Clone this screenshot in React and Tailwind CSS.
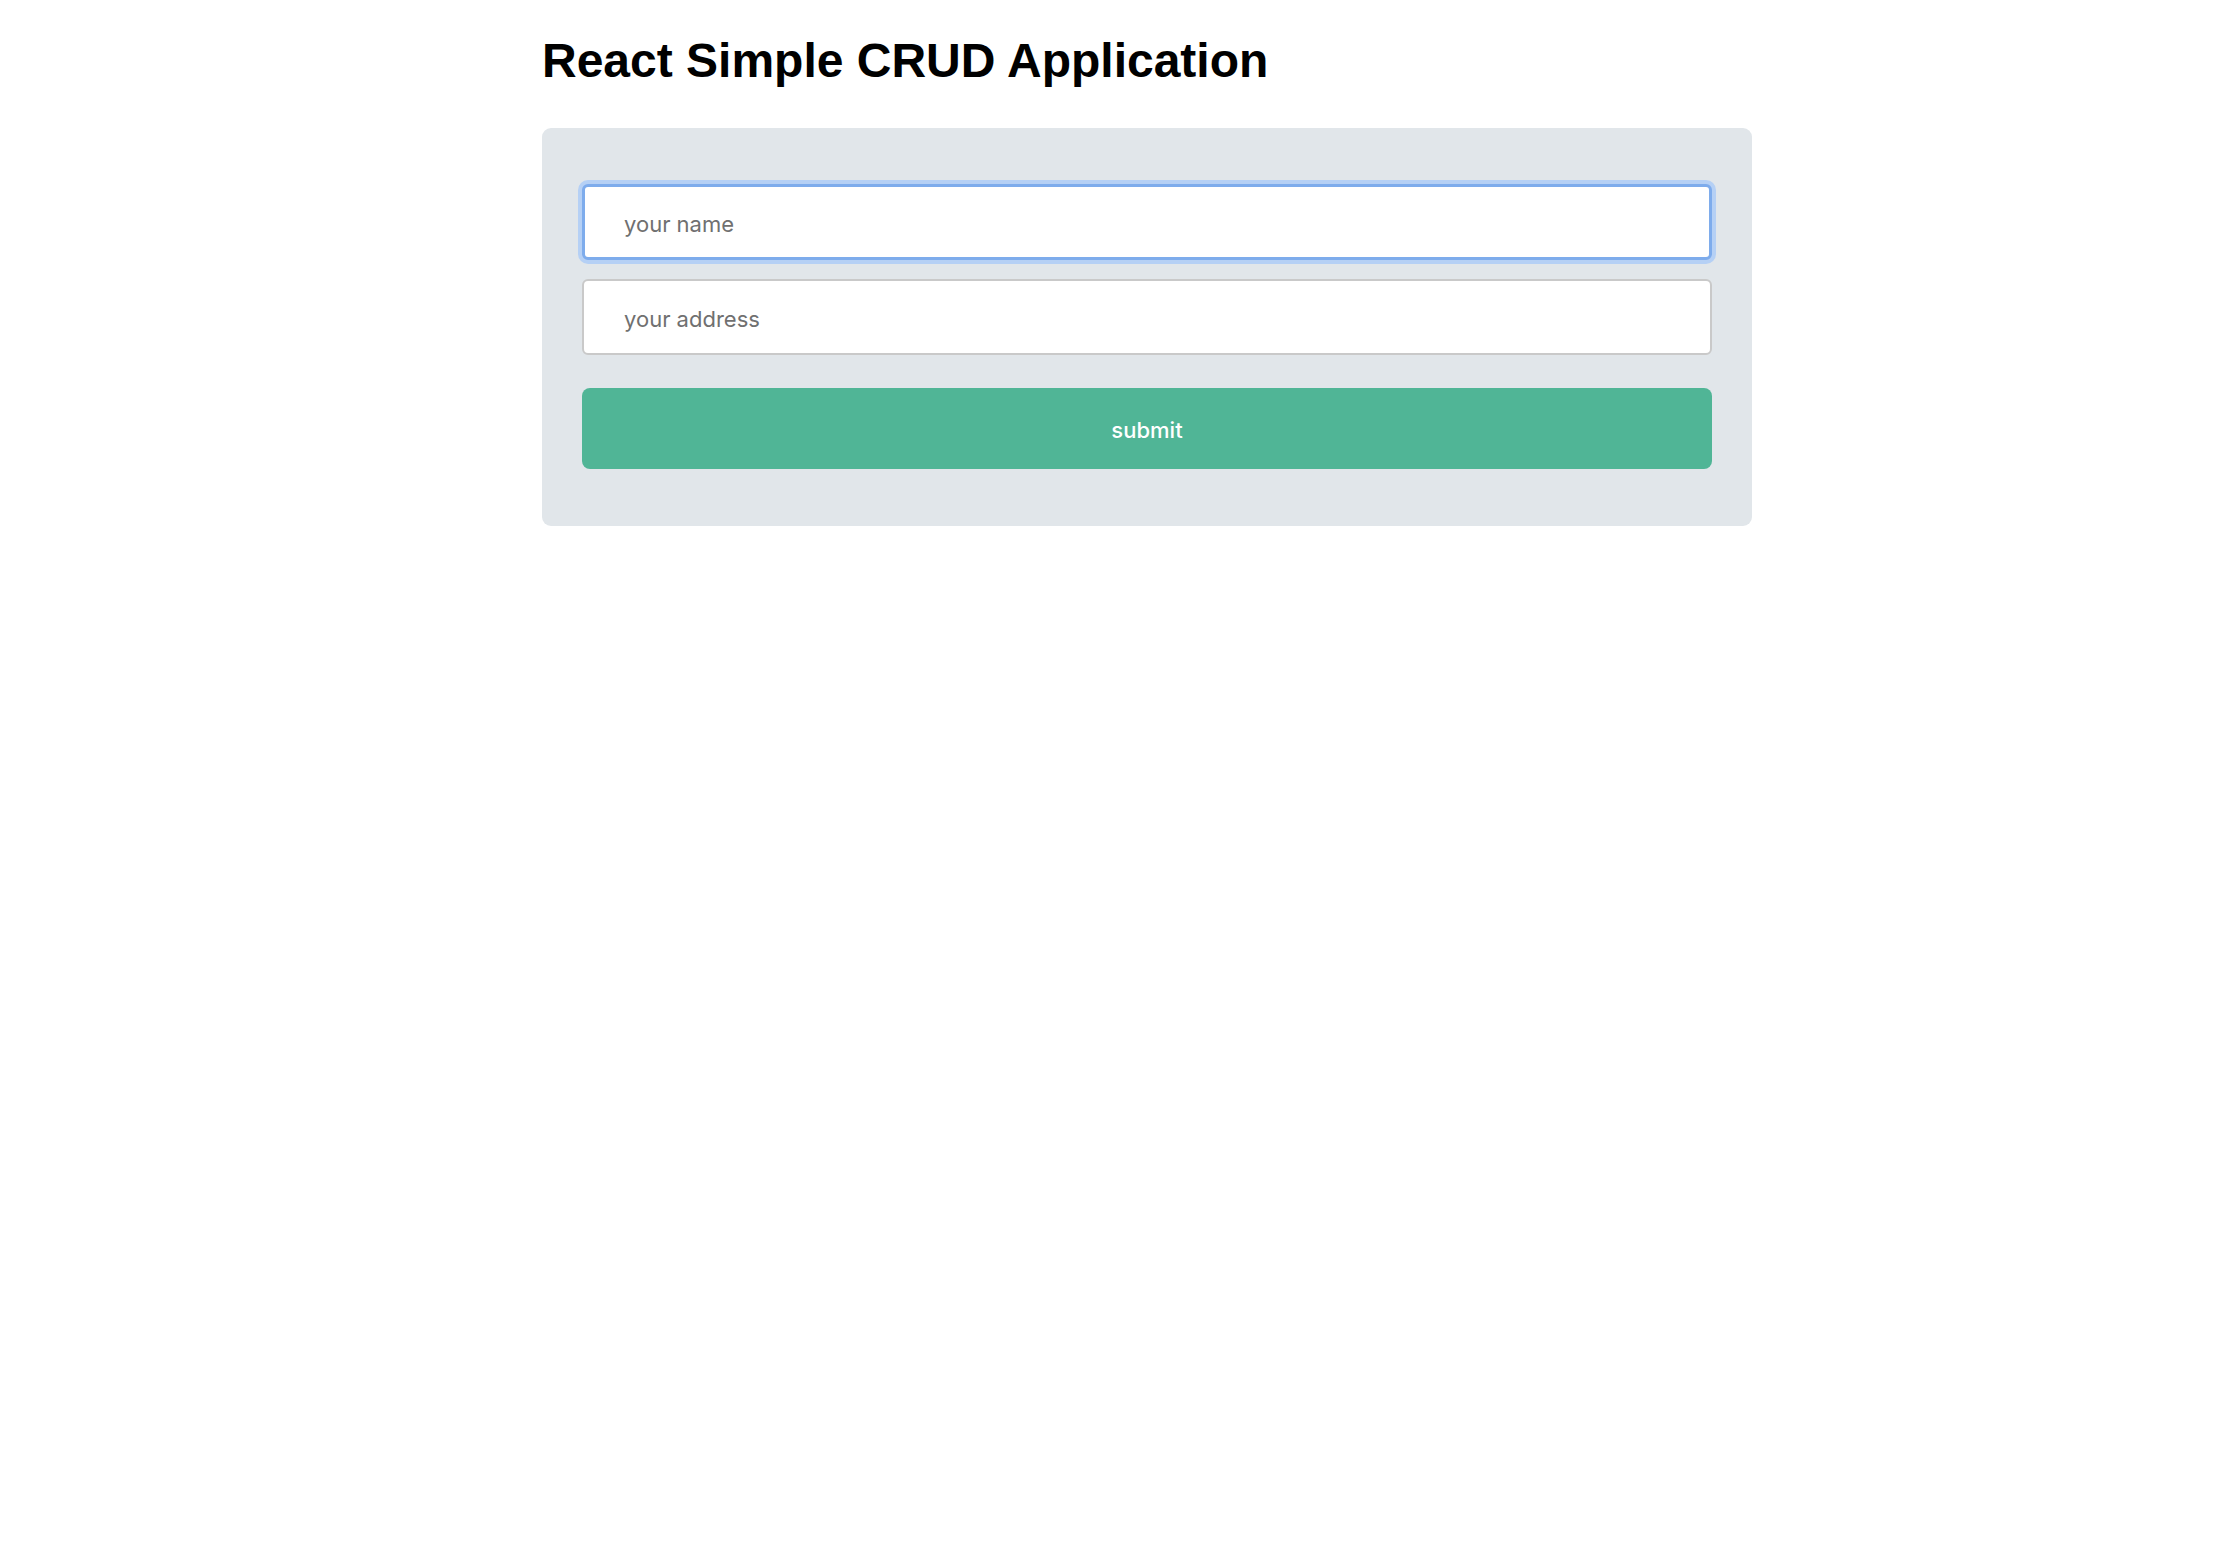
import React, { useState } from "react";

function App() {
    const [name, setName] = useState("");
    const [address, setAddress] = useState("");

    return (
        <div className="min-h-screen bg-white pl-[542px] pt-[33px]">
            <h1 className="font-['Liberation_Sans',Arial,sans-serif] text-[48px] leading-[56px] font-bold text-black">
                React Simple CRUD Application
            </h1>

            <form
                className="mt-[39px] w-[1210px] rounded-[9px] bg-[#e1e6ea] px-[40px] pt-[56px] pb-[57px]"
                onSubmit={(e) => e.preventDefault()}
            >
                <div className="flex flex-col gap-[19px]">
                    <input
                        type="text"
                        value={name}
                        onChange={(e) => setName(e.target.value)}
                        placeholder="your name"
                        className="h-[76px] w-full rounded-[6px] border-[3px] border-[#7eacec] bg-white pt-[3px] pl-[39px] font-['Inter',sans-serif] text-[22px] text-[#333] outline-none shadow-[0_0_0_4px_#b5d0f5] placeholder:text-[#707070]"
                    />
                    <input
                        type="text"
                        value={address}
                        onChange={(e) => setAddress(e.target.value)}
                        placeholder="your address"
                        className="h-[76px] w-full rounded-[6px] border-2 border-[#c9c9c9] bg-white pt-[3px] pl-[40px] font-['Inter',sans-serif] text-[22px] text-[#333] outline-none placeholder:text-[#707070]"
                    />
                </div>
                <button
                    type="submit"
                    className="mt-[33px] h-[81px] w-full rounded-[8px] bg-[#50b596] pt-[3px] font-['Inter',sans-serif] text-[22px] font-medium text-white"
                >
                    submit
                </button>
            </form>
        </div>
    );
}

export default App;
